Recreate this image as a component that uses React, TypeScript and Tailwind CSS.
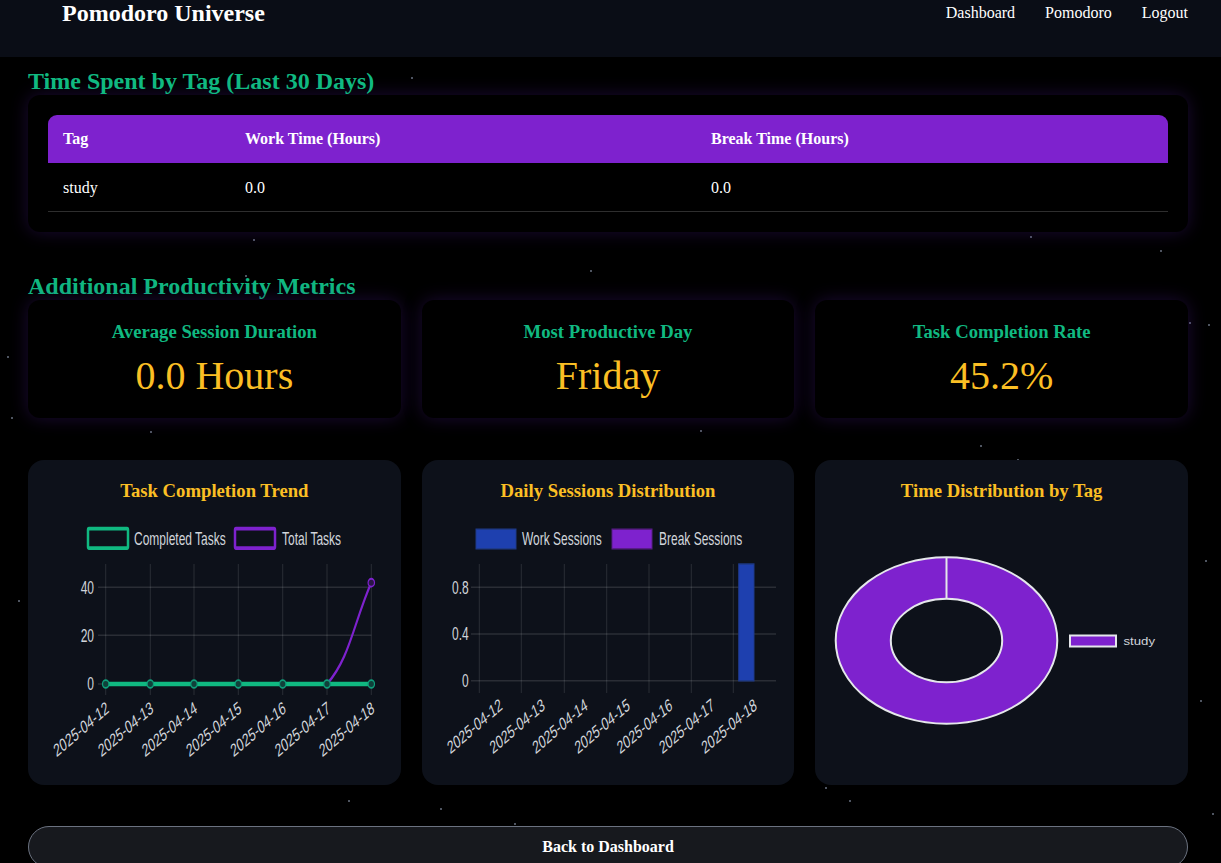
import React from 'react';

const stars = [
  [411, 77], [1101, 193], [300, 209], [253, 239], [7, 356], [150, 431], [11, 417],
  [1208, 324], [1189, 322], [1017, 459], [1058, 408], [922, 380], [348, 800],
  [514, 823], [825, 787], [849, 800], [1183, 838], [1212, 813], [440, 808],
  [760, 208], [1030, 236], [590, 270], [245, 275], [60, 520], [18, 600],
  [1205, 560], [1200, 700], [700, 430], [980, 445], [130, 460], [1160, 250],
];

const dates = ['2025-04-12', '2025-04-13', '2025-04-14', '2025-04-15', '2025-04-16', '2025-04-17', '2025-04-18'];

const txt = { fill: '#d1d5db', fontSize: 12, fontFamily: '"Liberation Sans", Arial, sans-serif' };
const grid = 'rgba(255,255,255,0.12)';

function LineChart() {
  const xs = [77.7, 122.3, 166, 210.3, 254.7, 299, 343.3];
  const ys = [
    { v: '40', y: 48.2 },
    { v: '20', y: 80.2 },
    { v: '0', y: 112.7 },
  ];
  return (
    <svg width="372" height="255" viewBox="0 0 372 170" preserveAspectRatio="none" className="block">
      <rect x="60" y="9" width="40" height="13" rx="1" fill="#0d111a" stroke="#10b981" strokeWidth="2.5" />
      <text x="106" y="19.7" style={txt}>Completed Tasks</text>
      <rect x="207" y="9" width="40" height="13" rx="1" fill="#0d111a" stroke="#7e22ce" strokeWidth="2.5" />
      <text x="254" y="19.7" style={txt}>Total Tasks</text>

      {xs.map((x) => (
        <line key={x} x1={x} x2={x} y1="32.7" y2="120" stroke={grid} strokeWidth="1" />
      ))}
      {ys.map((t) => (
        <g key={t.v}>
          <line x1="70" x2="343.3" y1={t.y} y2={t.y} stroke={grid} strokeWidth="1" />
          <text x="66" y={t.y + 4.3} textAnchor="end" style={txt}>{t.v}</text>
        </g>
      ))}

      <path d="M77.7 112.7 L299 112.7 C321.9 95.3 325.6 72.1 343.3 45.1" fill="none" stroke="#7e22ce" strokeWidth="2" />
      <ellipse cx="343.3" cy="45.1" rx="3.2" ry="2.6" fill="#2a1645" stroke="#7e22ce" strokeWidth="1.2" />
      <line x1="77.7" x2="343.3" y1="112.7" y2="112.7" stroke="#10b981" strokeWidth="3" />
      {xs.map((x) => (
        <ellipse key={x} cx={x} cy="112.7" rx="3.2" ry="2.6" fill="#10403a" stroke="#0f9d7a" strokeWidth="1.2" />
      ))}

      {xs.map((x, i) => (
        <text key={dates[i]} transform={`translate(${x + 4} 131) rotate(-30)`} textAnchor="end" style={txt}>
          {dates[i]}
        </text>
      ))}
    </svg>
  );
}

function BarChart() {
  const lines = [57.3, 99.3, 142.3, 184.7, 227, 269.3, 311.3];
  const centers = [78.3, 120.8, 163.5, 205.9, 248.2, 290.3, 332.7];
  const ys = [
    { v: '0.8', y: 48.2 },
    { v: '0.4', y: 79.3 },
    { v: '0', y: 110.5 },
  ];
  return (
    <svg width="372" height="255" viewBox="0 0 372 170" preserveAspectRatio="none" className="block">
      <rect x="54" y="9.5" width="40" height="13" fill="#1e40af" stroke="#1e3a8a" strokeWidth="1" />
      <text x="100" y="19.7" style={txt}>Work Sessions</text>
      <rect x="190" y="9.5" width="40" height="13" fill="#7e22ce" stroke="#581c87" strokeWidth="1" />
      <text x="237" y="19.7" style={txt}>Break Sessions</text>

      {lines.map((x) => (
        <line key={x} x1={x} x2={x} y1="32.7" y2="118.7" stroke={grid} strokeWidth="1" />
      ))}
      {ys.map((t) => (
        <g key={t.v}>
          <line x1="49" x2="354" y1={t.y} y2={t.y} stroke={grid} strokeWidth="1" />
          <text x="46.7" y={t.y + 4.3} textAnchor="end" style={txt}>{t.v}</text>
        </g>
      ))}

      <rect x="316.7" y="32.7" width="15.3" height="77.8" fill="#1e40af" stroke="#1e3a8a" strokeWidth="1" />

      {centers.map((x, i) => (
        <text key={dates[i]} transform={`translate(${x + 3} 129) rotate(-30)`} textAnchor="end" style={txt}>
          {dates[i]}
        </text>
      ))}
    </svg>
  );
}

function DoughnutChart() {
  return (
    <svg width="372" height="255" viewBox="0 0 372 255" className="block">
      <ellipse cx="131.5" cy="125.5" rx="110.8" ry="83.2" fill="#7e22ce" stroke="#e5e7eb" strokeWidth="2" />
      <ellipse cx="131.5" cy="125.5" rx="55.7" ry="41.7" fill="#0d111a" stroke="#e5e7eb" strokeWidth="2" />
      <line x1="131.5" x2="131.5" y1="42.3" y2="84" stroke="#e5e7eb" strokeWidth="2" />
      <rect x="255" y="120.5" width="46" height="11" fill="#7e22ce" stroke="#e5e7eb" strokeWidth="2" />
      <text
        transform="translate(308.5 130) scale(1.2 1)"
        style={{ ...txt, fontSize: 11 }}
      >
        study
      </text>
    </svg>
  );
}

function MetricCard({ title, value }: { title: string; value: string }) {
  return (
    <div className="rounded-xl bg-black pt-[21px] pb-[19px] text-center shadow-[0_0_18px_rgba(76,29,149,0.35)]">
      <h3 className="text-[18.7px] leading-[22px] font-bold text-[#10b981]">{title}</h3>
      <div className="mt-[10px] text-[40px] leading-[46px] text-[#fbbf24]">{value}</div>
    </div>
  );
}

function ChartCard({ title, children }: { title: string; children: React.ReactNode }) {
  return (
    <div className="flex h-[325px] flex-col rounded-2xl bg-[#0d111a] pt-5">
      <h3 className="text-center text-[18.7px] leading-[22px] font-bold text-[#fbbf24]">{title}</h3>
      <div className="mt-[13px]">{children}</div>
    </div>
  );
}

export default function App() {
  return (
    <div className="relative min-h-screen overflow-hidden bg-black font-['Liberation_Serif',_'Times_New_Roman',_serif] text-white">
      <div className="pointer-events-none absolute inset-0">
        {stars.map(([x, y], i) => (
          <span
            key={i}
            className="absolute h-[2px] w-[2px] rounded-full bg-gray-500"
            style={{ left: x, top: y }}
          />
        ))}
      </div>

      <header className="relative flex h-[57px] items-start justify-between bg-[#0a0d16] pl-[62px] pr-[33px]">
        <h1 className="text-[24px] leading-[26px] font-bold">Pomodoro Universe</h1>
        <nav className="flex gap-[30px] text-base leading-[26px]">
          <a href="#">Dashboard</a>
          <a href="#">Pomodoro</a>
          <a href="#">Logout</a>
        </nav>
      </header>

      <main className="relative pl-[28px] pr-[33px] pb-10">
        <h2 className="mt-[10px] text-2xl leading-[28px] font-bold text-[#10b981]">Time Spent by Tag (Last 30 Days)</h2>
        <div className="rounded-xl bg-black p-5 shadow-[0_0_18px_rgba(76,29,149,0.35)]">
          <table className="w-full border-collapse text-left text-base leading-[18px]">
            <thead>
              <tr className="bg-[#7e22ce]">
                <th className="w-[182px] rounded-tl-[9px] px-[15px] py-[15px] font-bold">Tag</th>
                <th className="w-[466px] px-[15px] py-[15px] font-bold">Work Time (Hours)</th>
                <th className="rounded-tr-[9px] px-[15px] py-[15px] font-bold">Break Time (Hours)</th>
              </tr>
            </thead>
            <tbody>
              <tr className="border-b border-[#2e2e2e]">
                <td className="px-[15px] pt-[16px] pb-[14px]">study</td>
                <td className="px-[15px] pt-[16px] pb-[14px]">0.0</td>
                <td className="px-[15px] pt-[16px] pb-[14px]">0.0</td>
              </tr>
            </tbody>
          </table>
        </div>

        <h2 className="mt-10 text-2xl leading-[28px] font-bold text-[#10b981]">Additional Productivity Metrics</h2>
        <div className="grid grid-cols-3 gap-[21px]">
          <MetricCard title="Average Session Duration" value="0.0 Hours" />
          <MetricCard title="Most Productive Day" value="Friday" />
          <MetricCard title="Task Completion Rate" value="45.2%" />
        </div>

        <div className="mt-[42px] grid grid-cols-3 gap-[21px]">
          <ChartCard title="Task Completion Trend">
            <LineChart />
          </ChartCard>
          <ChartCard title="Daily Sessions Distribution">
            <BarChart />
          </ChartCard>
          <ChartCard title="Time Distribution by Tag">
            <DoughnutChart />
          </ChartCard>
        </div>

        <button className="mt-[41px] h-[42px] w-full rounded-full border border-[#6b7280] bg-[#17191e] text-base font-bold">
          Back to Dashboard
        </button>
      </main>
    </div>
  );
}
